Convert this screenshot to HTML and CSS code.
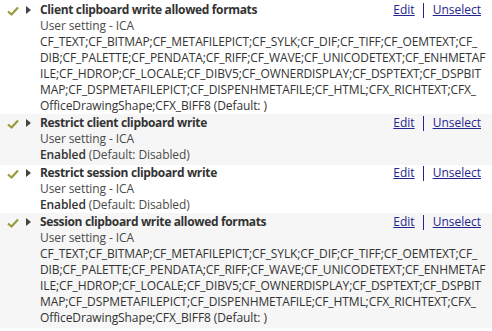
FILE: index.html
```html
<!DOCTYPE html>
<html>
<head>
<meta charset="utf-8">
<link rel="stylesheet" href="styles.css">
</head>
<body>
<div class="list">
  <div class="row first">
    <div class="icons">
      <svg class="check" width="12" height="10" viewBox="0 0 12 10"><path d="M1 5.5 L4.5 8.5 L11 1.5" fill="none" stroke="#9a9a3c" stroke-width="2.2" stroke-linejoin="round"/></svg>
      <svg class="arrow" width="5" height="8" viewBox="0 0 5 8"><path d="M0 0 L5 4 L0 8 Z" fill="#444"/></svg>
    </div>
    <div class="body">
      <div class="head"><span class="title">Client clipboard write allowed formats</span><span class="links"><a href="#">Edit</a><span class="sep"></span><a href="#">Unselect</a></span></div>
      <div class="line">User setting - ICA</div>
      <div class="value">
        <span>CF_TEXT;CF_BITMAP;CF_METAFILEPICT;CF_SYLK;CF_DIF;CF_TIFF;CF_OEMTEXT;CF_</span>
        <span>DIB;CF_PALETTE;CF_PENDATA;CF_RIFF;CF_WAVE;CF_UNICODETEXT;CF_ENHMETAF</span>
        <span>ILE;CF_HDROP;CF_LOCALE;CF_DIBV5;CF_OWNERDISPLAY;CF_DSPTEXT;CF_DSPBIT</span>
        <span>MAP;CF_DSPMETAFILEPICT;CF_DISPENHMETAFILE;CF_HTML;CFX_RICHTEXT;CFX_</span>
        <span>OfficeDrawingShape;CFX_BIFF8 (Default: )</span>
      </div>
    </div>
  </div>
  <div class="row alt">
    <div class="icons">
      <svg class="check" width="12" height="10" viewBox="0 0 12 10"><path d="M1 5.5 L4.5 8.5 L11 1.5" fill="none" stroke="#9a9a3c" stroke-width="2.2" stroke-linejoin="round"/></svg>
      <svg class="arrow" width="5" height="8" viewBox="0 0 5 8"><path d="M0 0 L5 4 L0 8 Z" fill="#444"/></svg>
    </div>
    <div class="body">
      <div class="head"><span class="title">Restrict client clipboard write</span><span class="links"><a href="#">Edit</a><span class="sep"></span><a href="#">Unselect</a></span></div>
      <div class="line">User setting - ICA</div>
      <div class="line"><span class="strong">Enabled</span> (Default: Disabled)</div>
    </div>
  </div>
  <div class="row">
    <div class="icons">
      <svg class="check" width="12" height="10" viewBox="0 0 12 10"><path d="M1 5.5 L4.5 8.5 L11 1.5" fill="none" stroke="#9a9a3c" stroke-width="2.2" stroke-linejoin="round"/></svg>
      <svg class="arrow" width="5" height="8" viewBox="0 0 5 8"><path d="M0 0 L5 4 L0 8 Z" fill="#444"/></svg>
    </div>
    <div class="body">
      <div class="head"><span class="title">Restrict session clipboard write</span><span class="links"><a href="#">Edit</a><span class="sep"></span><a href="#">Unselect</a></span></div>
      <div class="line">User setting - ICA</div>
      <div class="line"><span class="strong">Enabled</span> (Default: Disabled)</div>
    </div>
  </div>
  <div class="row alt">
    <div class="icons">
      <svg class="check" width="12" height="10" viewBox="0 0 12 10"><path d="M1 5.5 L4.5 8.5 L11 1.5" fill="none" stroke="#9a9a3c" stroke-width="2.2" stroke-linejoin="round"/></svg>
      <svg class="arrow" width="5" height="8" viewBox="0 0 5 8"><path d="M0 0 L5 4 L0 8 Z" fill="#444"/></svg>
    </div>
    <div class="body">
      <div class="head"><span class="title">Session clipboard write allowed formats</span><span class="links"><a href="#">Edit</a><span class="sep"></span><a href="#">Unselect</a></span></div>
      <div class="line">User setting - ICA</div>
      <div class="value">
        <span>CF_TEXT;CF_BITMAP;CF_METAFILEPICT;CF_SYLK;CF_DIF;CF_TIFF;CF_OEMTEXT;CF_</span>
        <span>DIB;CF_PALETTE;CF_PENDATA;CF_RIFF;CF_WAVE;CF_UNICODETEXT;CF_ENHMETAF</span>
        <span>ILE;CF_HDROP;CF_LOCALE;CF_DIBV5;CF_OWNERDISPLAY;CF_DSPTEXT;CF_DSPBIT</span>
        <span>MAP;CF_DSPMETAFILEPICT;CF_DISPENHMETAFILE;CF_HTML;CFX_RICHTEXT;CFX_</span>
        <span>OfficeDrawingShape;CFX_BIFF8 (Default: )</span>
      </div>
    </div>
  </div>
</div>
</body>
</html>
```

FILE: styles.css
```css
html, body {
  margin: 0;
  padding: 0;
  background: #ffffff;
}
body {
  font-family: "Open Sans", "Noto Sans", sans-serif;
  font-size: 12px;
  line-height: 16px;
  color: #3a3a3a;
  letter-spacing: -0.1px;
}
.list {
  width: 492px;
}
.row {
  display: flex;
  padding: 0;
}
.row.first {
  padding-top: 2px;
}
.row.alt {
  background: #f6f6f6;
  padding: 1px 0 2px 0;
}
.icons {
  width: 40px;
  flex: none;
  display: flex;
  align-items: flex-start;
  padding-top: 4px;
}
.check {
  margin-left: 7px;
}
.arrow {
  margin-left: 7px;
  margin-top: 0;
}
.body {
  width: 442px;
  flex: none;
}
.head {
  display: flex;
  justify-content: space-between;
}
.title {
  font-weight: 700;
  letter-spacing: -0.35px;
  color: #333333;
}
.line {
  color: #4a4a4a;
}
.strong {
  font-weight: 600;
  color: #333333;
}
.links {
  display: flex;
  align-items: center;
  margin-right: 1px;
  letter-spacing: 0;
}
.links a {
  color: #24248e;
  text-decoration: underline;
}
.sep {
  display: inline-block;
  width: 1px;
  height: 15px;
  background: #24248e;
  margin: 0 9px 0 8px;
}
.value {
  display: flex;
  flex-direction: column;
  white-space: nowrap;
  color: #333333;
}
```
